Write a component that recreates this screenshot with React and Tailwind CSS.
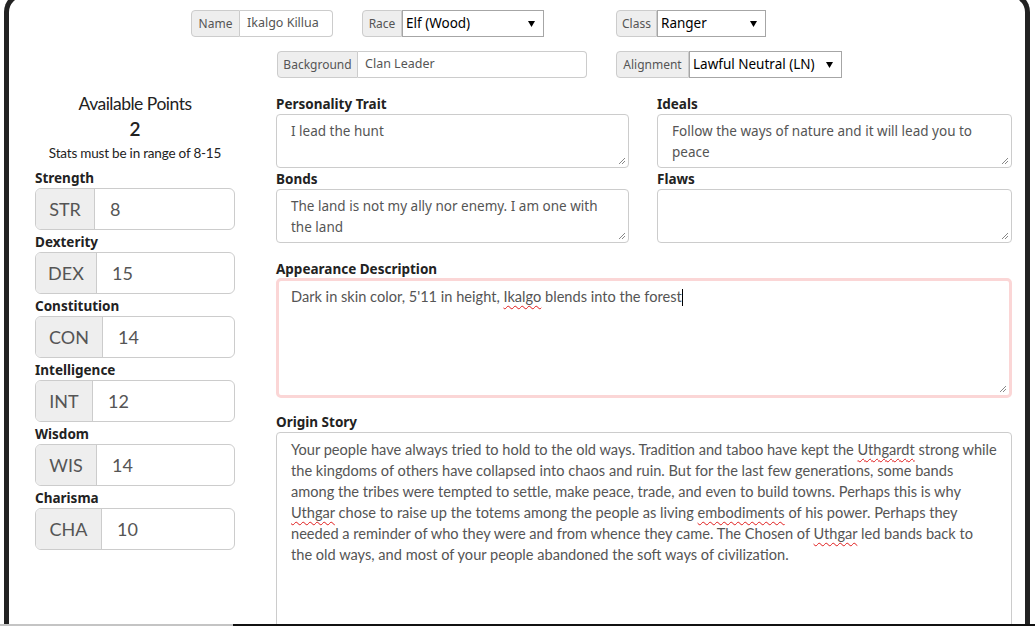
import React from 'react';

const seg = "font-['Noto_Sans',sans-serif]";
const cond = "font-['Lato',sans-serif]";

const stats = [
  { name: 'Strength', abbr: 'STR', value: 8, w: 'w-[59px]' },
  { name: 'Dexterity', abbr: 'DEX', value: 15, w: 'w-[61px]' },
  { name: 'Constitution', abbr: 'CON', value: 14, w: 'w-[67px]' },
  { name: 'Intelligence', abbr: 'INT', value: 12, w: 'w-[57px]' },
  { name: 'Wisdom', abbr: 'WIS', value: 14, w: 'w-[61px]' },
  { name: 'Charisma', abbr: 'CHA', value: 10, w: 'w-[66px]' },
];

function Caret() {
  return (
    <svg width="7" height="6" viewBox="0 0 7 6" className="shrink-0">
      <path d="M0 0h7L3.5 6z" fill="#000" />
    </svg>
  );
}

function Grip() {
  return (
    <svg width="9" height="9" viewBox="0 0 9 9" className="absolute right-[2px] bottom-[2px]">
      <path d="M8 2L2 8M8 5L5 8" stroke="#888" strokeWidth="1" />
    </svg>
  );
}

function Addon({ children, w }) {
  return (
    <span className={`flex items-center justify-center shrink-0 ${w} bg-[#eee] border border-[#ccc] rounded-l-[4px] text-[12px] text-[#555] ${seg}`}>
      {children}
    </span>
  );
}

function TextGroup({ label, labelW, value, inputW }) {
  return (
    <div className="flex h-[27px]">
      <Addon w={labelW}>{label}</Addon>
      <span className={`flex items-center ${inputW} pl-[7px] border border-l-0 border-[#ccc] rounded-r-[4px] bg-white text-[12.5px] text-[#555] ${seg}`}>
        {value}
      </span>
    </div>
  );
}

function SelectGroup({ label, labelW, value, selW }) {
  return (
    <div className="flex h-[27px]">
      <Addon w={labelW}>{label}</Addon>
      <span className={`flex items-center justify-between ${selW} pl-[3px] pr-[8px] border border-[#a6a6a6] bg-white text-[13.5px] text-black ${seg}`}>
        {value}
        <Caret />
      </span>
    </div>
  );
}

function Label({ children, className = '' }) {
  return (
    <div className={`text-[13.5px] font-bold leading-[20px] text-[#222] ${seg} ${className}`}>{children}</div>
  );
}

function Area({ lines, className = '' }) {
  return (
    <div className={`relative h-[54px] border border-[#ccc] rounded-[4px] bg-white pl-[14px] pt-[6px] text-[13.5px] leading-[21px] text-[#555] ${seg} ${className}`}>
      {lines.map((l, i) => (
        <div key={i} className="whitespace-nowrap">{l}</div>
      ))}
      <Grip />
    </div>
  );
}

function Typo({ children }) {
  return (
    <span className="underline decoration-wavy decoration-[#e01b1b] decoration-1 underline-offset-[3px]">{children}</span>
  );
}

export default function App() {
  return (
    <div className="h-[626px] overflow-hidden bg-white flex flex-col">
      <div className="flex-1 min-h-0 overflow-hidden ml-[4px] mr-[5px] -mt-[8px] border-[5px] border-b-0 border-[#222] rounded-t-[20px]">
        {/* top inputs */}
        <div className="flex mt-[13px] ml-[182px]">
          <TextGroup label="Name" labelW="w-[49px]" value="Ikalgo Killua" inputW="w-[93px]" />
          <div className="ml-[29px]">
            <SelectGroup label="Race" labelW="w-[40px]" value="Elf (Wood)" selW="w-[142px]" />
          </div>
          <div className="ml-[72px]">
            <SelectGroup label="Class" labelW="w-[41px]" value="Ranger" selW="w-[109px]" />
          </div>
        </div>
        <div className="flex mt-[14px] ml-[268px]">
          <TextGroup label="Background" labelW="w-[81px]" value="Clan Leader" inputW="w-[229px]" />
          <div className="ml-[29px]">
            <SelectGroup label="Alignment" labelW="w-[73px]" value="Lawful Neutral (LN)" selW="w-[153px]" />
          </div>
        </div>

        <div className="flex mt-[14px]">
          {/* stats */}
          <div className={`ml-[26px] w-[200px] shrink-0 ${cond}`}>
            <div className="text-center text-[17.5px] leading-[24px] tracking-[-0.5px] text-[#222]">Available Points</div>
            <div className="text-center text-[19px] font-semibold leading-[26px] text-[#222]">2</div>
            <div className="text-center text-[13.5px] leading-[20px] mt-[1px] tracking-[-0.2px] text-[#222]">Stats must be in range of 8-15</div>
            <div className="mt-[3px]">
              {stats.map((s) => (
                <div key={s.abbr}>
                  <div className={`pt-[3px] pb-[1px] text-[13.5px] font-bold leading-[18px] text-[#222] ${seg}`}>{s.name}</div>
                  <div className="flex h-[42px] border border-[#ccc] rounded-[6px] overflow-hidden">
                    <span className={`flex items-center justify-center ${s.w} bg-[#eee] border-r border-[#ccc] text-[18px] text-[#555]`}>{s.abbr}</span>
                    <span className="flex items-center pl-[15px] text-[18px] text-[#555]">{s.value}</span>
                  </div>
                </div>
              ))}
            </div>
          </div>

          {/* details */}
          <div className="ml-[41px] w-[736px] pt-[2px]">
            <div className="grid grid-cols-[353px_355px] gap-x-[28px]">
              <div>
                <Label>Personality Trait</Label>
                <Area lines={['I lead the hunt']} />
                <Label className="mt-[1px]">Bonds</Label>
                <Area lines={['The land is not my ally nor enemy. I am one with', 'the land']} />
              </div>
              <div>
                <Label>Ideals</Label>
                <Area lines={['Follow the ways of nature and it will lead you to', 'peace']} />
                <Label className="mt-[1px]">Flaws</Label>
                <Area lines={[]} />
              </div>
            </div>

            <Label className="mt-[16px]">Appearance Description</Label>
            <div className={`relative h-[120px] -mt-[1px] border-[3px] border-[#fbd6d6] rounded-[5px] bg-white pl-[12px] pt-[5px] text-[14.6px] leading-[21px] text-[#555] ${cond}`}>
              <div className="whitespace-nowrap">
                Dark in skin color, 5'11 in height, <Typo>Ikalgo</Typo> blends into the forest
                <span className="inline-block w-px h-[17px] bg-black align-[-4px]" />
              </div>
              <Grip />
            </div>

            <Label className="mt-[14px]">Origin Story</Label>
            <div className={`h-[260px] border border-[#ccc] rounded-[4px] bg-white pl-[14px] pt-[6px] text-[14.6px] leading-[21px] text-[#555] ${cond}`}>
              <div className="whitespace-nowrap">Your people have always tried to hold to the old ways. Tradition and taboo have kept the <Typo>Uthgardt</Typo> strong while</div>
              <div className="whitespace-nowrap">the kingdoms of others have collapsed into chaos and ruin. But for the last few generations, some bands</div>
              <div className="whitespace-nowrap">among the tribes were tempted to settle, make peace, trade, and even to build towns. Perhaps this is why</div>
              <div className="whitespace-nowrap"><Typo>Uthgar</Typo> chose to raise up the totems among the people as living <Typo>embodiments</Typo> of his power. Perhaps they</div>
              <div className="whitespace-nowrap">needed a reminder of who they were and from whence they came. The Chosen of <Typo>Uthgar</Typo> led bands back to</div>
              <div className="whitespace-nowrap">the old ways, and most of your people abandoned the soft ways of civilization.</div>
            </div>
          </div>
        </div>
      </div>
      <div className="flex h-[2px] shrink-0">
        <div className="w-[233px] bg-[#c4c4c4]" />
        <div className="flex-1 bg-[#111]" />
      </div>
    </div>
  );
}
